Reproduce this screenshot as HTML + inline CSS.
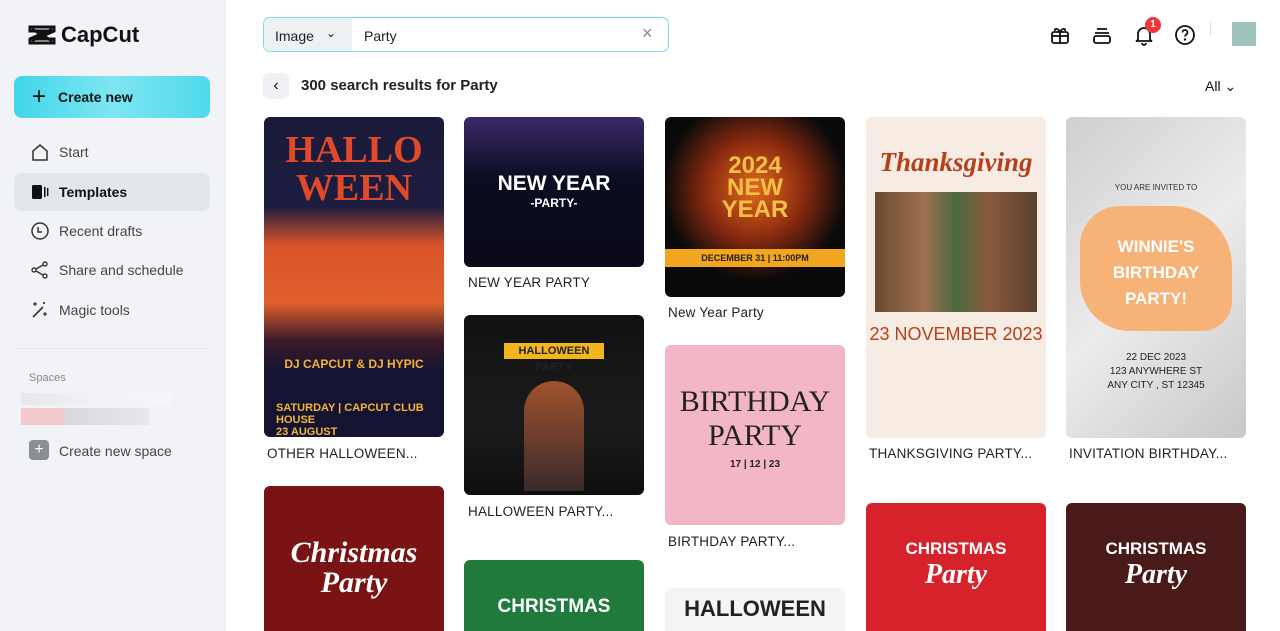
<!DOCTYPE html>
<html><head><meta charset="utf-8"><style>
*{box-sizing:border-box;margin:0;padding:0}
html,body{width:1280px;height:631px;overflow:hidden}
body{font-family:"Liberation Sans",sans-serif;background:#fff;position:relative}
.side{position:absolute;left:0;top:0;width:226px;height:631px;background:#f1f3f6}
.logo{position:absolute;left:28px;top:22px;font-size:22px;font-weight:bold;color:#111;display:flex;align-items:center;gap:5px}
.create{position:absolute;left:14px;top:76px;width:196px;height:42px;border-radius:8px;background:linear-gradient(90deg,#3fd6e8,#7ee6f2,#4fd9ea);font-weight:bold;font-size:14px;color:#111;display:flex;align-items:center;padding-left:18px;gap:12px}
.nav{position:absolute;left:14px;width:196px;height:38px;border-radius:8px;display:flex;align-items:center;padding-left:16px;gap:9px;font-size:14px;color:#444}
.nav svg{width:20px;height:20px}
.sel{background:#e3e7eb;font-weight:bold;color:#111}
.card{position:absolute;width:180px;border-radius:6px;overflow:hidden;color:#fff;text-align:center;font-weight:bold}
.lbl{position:absolute;font-size:13.5px;color:#222;letter-spacing:.2px}
.ic{position:absolute;top:24px;width:22px;height:22px}
</style></head><body>
<div class="side">
 <div class="logo"><svg width="28" height="22" viewBox="0 0 28 22"><path d="M2 3h24v4L8 15h18v4H2v-4l18-8H2z M4 5l20 12 M24 5L4 17" stroke="#111" stroke-width="3" fill="none"/></svg>CapCut</div>
 <div class="create"><span style="font-size:24px;font-weight:normal">+</span>Create new</div>
 <div class="nav" style="top:133px"><svg viewBox="0 0 20 20"><path d="M3 9l7-6 7 6v9H3z" fill="none" stroke="#333" stroke-width="1.5"/></svg>Start</div>
 <div class="nav sel" style="top:173px"><svg viewBox="0 0 20 20"><rect x="2" y="3" width="10" height="14" rx="1.5" fill="#111"/><rect x="14" y="5" width="1.6" height="10" fill="#111"/><rect x="17" y="6" width="1.4" height="8" fill="#111"/></svg>Templates</div>
 <div class="nav" style="top:212px"><svg viewBox="0 0 20 20"><circle cx="10" cy="10" r="8" fill="none" stroke="#333" stroke-width="1.5"/><path d="M8 6v5h4" fill="none" stroke="#333" stroke-width="1.5"/></svg>Recent drafts</div>
 <div class="nav" style="top:251px"><svg viewBox="0 0 20 20"><circle cx="15" cy="4" r="2" fill="none" stroke="#333" stroke-width="1.4"/><circle cx="4" cy="10" r="2" fill="none" stroke="#333" stroke-width="1.4"/><circle cx="15" cy="16" r="2" fill="none" stroke="#333" stroke-width="1.4"/><path d="M6 9l7-4M6 11l7 4" stroke="#333" stroke-width="1.4"/></svg>Share and schedule</div>
 <div class="nav" style="top:291px"><svg viewBox="0 0 20 20"><path d="M3 17L13 7" stroke="#333" stroke-width="1.6"/><path d="M5 2v4M3 4h4M15 12v4M13 14h4M14 2v2M13 3h2" stroke="#333" stroke-width="1.2"/></svg>Magic tools</div>
 <div style="position:absolute;left:14px;top:348px;width:196px;height:1px;background:#e0e3e7"></div>
 <div style="position:absolute;left:29px;top:372px;font-size:11px;color:#888">Spaces</div>
 <div style="position:absolute;left:21px;top:393px;width:150px;height:12px;background:linear-gradient(90deg,#e8e8ea,#f2f2f4,#f6f6f8)"></div>
 <div style="position:absolute;left:21px;top:408px;width:128px;height:17px;background:linear-gradient(90deg,#f2c9cc 0,#f2c9cc 43px,#d6d8dc 43px,#e6e8ea)"></div>
 <div style="position:absolute;left:29px;top:440px;width:20px;height:20px;border-radius:4px;background:#8a8f96;color:#fff;font-size:16px;text-align:center;line-height:20px">+</div>
 <div style="position:absolute;left:59px;top:443px;font-size:14px;color:#444">Create new space</div>
</div>

<div style="position:absolute;left:263px;top:17px;width:406px;height:35px;border:1px solid #7fd9e4;border-radius:7px;background:#fff">
 <div style="position:absolute;left:0;top:0;width:88px;height:33px;background:#eef1f4;border-radius:6px 0 0 6px;font-size:14px;color:#222;padding:10px 0 0 11px">Image<span style="position:absolute;left:62px;top:8px;font-size:12px">&#8964;</span></div>
 <div style="position:absolute;left:100px;top:10px;font-size:14px;color:#222">Party</div>
 <div style="position:absolute;left:378px;top:5px;font-size:18px;color:#888">×</div>
</div>

<svg class="ic" style="left:1049px" viewBox="0 0 22 22"><rect x="3" y="8" width="16" height="11" rx="2" fill="none" stroke="#111" stroke-width="1.8"/><path d="M3 12h16M11 8v11M11 8c-2-4-6-4-5-1M11 8c2-4 6-4 5-1" fill="none" stroke="#111" stroke-width="1.8"/></svg>
<svg class="ic" style="left:1091px" viewBox="0 0 22 22"><path d="M6 5h10M4 9h14" stroke="#111" stroke-width="1.8"/><rect x="3" y="12" width="16" height="7" rx="2" fill="none" stroke="#111" stroke-width="1.8"/></svg>
<svg class="ic" style="left:1133px" viewBox="0 0 22 22"><path d="M5 16V10a6 6 0 0112 0v6l2 1H3z M9 19a2 2 0 004 0" fill="none" stroke="#111" stroke-width="1.8"/></svg>
<div style="position:absolute;left:1145px;top:17px;width:16px;height:16px;border-radius:50%;background:#f0363b;color:#fff;font-size:10px;text-align:center;line-height:16px;font-weight:bold">1</div>
<svg class="ic" style="left:1174px" viewBox="0 0 22 22"><circle cx="11" cy="11" r="9" fill="none" stroke="#111" stroke-width="1.8"/><path d="M8.5 8.5a2.5 2.5 0 115 0c0 2-2.5 2-2.5 4" fill="none" stroke="#111" stroke-width="1.8"/><circle cx="11" cy="15.5" r="1.2" fill="#111"/></svg>
<div style="position:absolute;left:1210px;top:22px;width:1px;height:14px;background:#ddd"></div>
<div style="position:absolute;left:1232px;top:22px;width:24px;height:24px;background:#9fc4bb"></div>

<div style="position:absolute;left:263px;top:73px;width:26px;height:26px;border-radius:6px;background:#eef0f3;text-align:center;line-height:26px;font-size:16px;color:#111">&#8249;</div>
<div style="position:absolute;left:301px;top:77px;font-size:15px;font-weight:bold;color:#222">300 search results for Party</div>
<div style="position:absolute;left:1205px;top:78px;font-size:14px;color:#111">All &#8964;</div>

<!-- col1 -->
<div class="card" style="left:264px;top:117px;height:320px;background:linear-gradient(180deg,#1a1a3a 0,#1d1d40 28%,#d9532a 40%,#e0602d 58%,#3a1a2a 70%,#141432 80%)">
 <div style="font-size:38px;color:#e04a2a;margin-top:14px;line-height:38px;font-family:'Liberation Serif',serif">HALLO<br>WEEN</div>
 <div style="position:absolute;top:240px;width:100%;font-size:12px;color:#f5b437">DJ CAPCUT &amp; DJ HYPIC</div>
 <div style="position:absolute;top:285px;left:12px;font-size:11px;color:#f5b437;text-align:left">SATURDAY | CAPCUT CLUB HOUSE<br>23 AUGUST</div>
</div>
<div class="lbl" style="left:267px;top:446px">OTHER HALLOWEEN...</div>
<div class="card" style="left:264px;top:486px;height:150px;background:#7a1414"><div style="font-family:'Liberation Serif',serif;font-style:italic;font-size:30px;margin-top:52px;line-height:30px">Christmas<br>Party</div></div>
<!-- col2 -->
<div class="card" style="left:464px;top:117px;height:150px;background:linear-gradient(180deg,#3a2a6a,#0c0c22 40%,#0a0a1a)"><div style="font-size:21px;margin-top:55px">NEW YEAR</div><div style="font-size:12px">-PARTY-</div></div>
<div class="lbl" style="left:468px;top:275px">NEW YEAR PARTY</div>
<div class="card" style="left:464px;top:315px;height:180px;background:linear-gradient(180deg,#111 0,#1b1b1b 60%,#0e0e0e);"><div style="margin:28px auto 0;width:100px;height:16px;background:#f2b51e;color:#222;font-size:11px;line-height:16px">HALLOWEEN PARTY</div><div style="margin:22px auto 0;width:60px;height:110px;background:linear-gradient(#a0522d,#3a2a2a);border-radius:30px 30px 0 0"></div></div>
<div class="lbl" style="left:468px;top:504px">HALLOWEEN PARTY...</div>
<div class="card" style="left:464px;top:560px;height:80px;background:#1f7a3c"><div style="font-size:19px;margin-top:36px">CHRISTMAS</div></div>
<!-- col3 -->
<div class="card" style="left:665px;top:117px;height:180px;background:radial-gradient(circle at 50% 40%,#e06a1a,#8a2a10 35%,#0a0a0a 65%)"><div style="font-size:24px;color:#f5c04a;margin-top:38px;line-height:22px">2024<br>NEW<br>YEAR</div><div style="margin:28px 0 0;height:18px;background:#f2a51e;color:#222;font-size:9px;line-height:18px">DECEMBER 31 | 11:00PM</div></div>
<div class="lbl" style="left:668px;top:305px">New Year Party</div>
<div class="card" style="left:665px;top:345px;height:180px;background:#f3b6c6;color:#222"><div style="font-size:30px;margin-top:40px;line-height:34px;font-weight:normal;font-family:'Liberation Serif',serif">BIRTHDAY<br>PARTY</div><div style="font-size:10px;margin-top:6px">17 | 12 | 23</div></div>
<div class="lbl" style="left:668px;top:534px">BIRTHDAY PARTY...</div>
<div class="card" style="left:665px;top:588px;height:50px;background:#f4f4f4;color:#222"><div style="font-size:22px;margin-top:8px">HALLOWEEN</div></div>
<!-- col4 -->
<div class="card" style="left:866px;top:117px;height:321px;background:#f6ece4;color:#b5401a"><div style="font-family:'Liberation Serif',serif;font-style:italic;font-size:27px;margin-top:30px">Thanksgiving</div><div style="margin:14px 9px 0;height:120px;background:linear-gradient(90deg,#6a4a30,#a07050 30%,#4a6a40 50%,#8a5a3a 70%,#5a4030)"></div><div style="font-size:18px;font-weight:normal;margin-top:12px">23 NOVEMBER 2023</div></div>
<div class="lbl" style="left:869px;top:446px">THANKSGIVING PARTY...</div>
<div class="card" style="left:866px;top:503px;height:135px;background:#d6222a"><div style="font-size:17px;margin-top:36px">CHRISTMAS</div><div style="font-family:'Liberation Serif',serif;font-style:italic;font-size:28px">Party</div></div>
<!-- col5 -->
<div class="card" style="left:1066px;top:117px;height:321px;background:linear-gradient(135deg,#cfcfcf,#ececec 50%,#c8c8c8)"><div style="font-size:8px;color:#333;font-weight:normal;margin-top:66px">YOU ARE INVITED TO</div><div style="margin:14px 14px 0;height:125px;background:#f6b277;border-radius:40px 60px 30px 50px;font-size:17px;padding-top:28px;line-height:26px">WINNIE'S<br>BIRTHDAY<br>PARTY!</div><div style="font-size:10px;color:#222;font-weight:normal;margin-top:20px;line-height:14px">22 DEC 2023<br>123 ANYWHERE ST<br>ANY CITY , ST 12345</div></div>
<div class="lbl" style="left:1069px;top:446px">INVITATION BIRTHDAY...</div>
<div class="card" style="left:1066px;top:503px;height:135px;background:#4a1a1a"><div style="font-size:17px;margin-top:36px">CHRISTMAS</div><div style="font-family:'Liberation Serif',serif;font-style:italic;font-size:28px">Party</div></div>
</body></html>
